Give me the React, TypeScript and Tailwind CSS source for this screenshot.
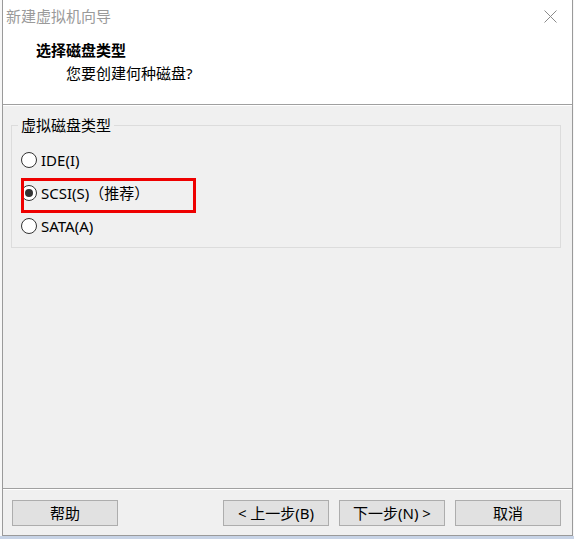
import React from "react";

const FONT = '"Noto Sans", "Noto Sans CJK SC", sans-serif';

function Radio({ checked, label, extra }: { checked?: boolean; label: string; extra?: string }) {
  return (
    <div className="flex items-center h-[33px] pl-[9px]">
      <span className="w-[16px] h-[16px] rounded-full border border-[#333333] bg-white flex items-center justify-center shrink-0">
        {checked && <span className="w-[8px] h-[8px] rounded-full bg-[#333333]" />}
      </span>
      <span className="ml-[4px] text-[15px] leading-[20px] text-black">{label}</span>
      {extra && <span className="text-[15px] leading-[20px] text-black">{extra}</span>}
    </div>
  );
}

function Btn({ children }: { children: React.ReactNode }) {
  return (
    <button className="w-[106px] h-[26px] bg-[#e1e1e1] border border-[#adadad] text-[15px] leading-[20px] text-black flex items-center justify-center">
      {children}
    </button>
  );
}

export default function App() {
  return (
    <div className="w-[574px] h-[539px] bg-[#f7f7f7] overflow-hidden relative" style={{ fontFamily: FONT }}>
      <div className="ml-[2px] w-[571px] h-[536px] bg-[#f0f0f0] border-l border-r border-b border-[#9a9a9a] flex flex-col">
        {/* title bar */}
        <div className="h-[32px] bg-white flex items-center justify-between pl-[3px] pr-[14px]">
          <span className="text-[15px] leading-[20px] text-[#9a9a9a]">新建虚拟机向导</span>
          <svg width="13" height="13" viewBox="0 0 13 13" className="mr-[1px]">
            <path d="M0.5 0.5 L12.5 12.5 M12.5 0.5 L0.5 12.5" stroke="#8a8a8a" strokeWidth="1" fill="none" />
          </svg>
        </div>
        {/* header */}
        <div className="h-[72px] bg-white pl-[33px] pt-[8px]">
          <div className="text-[15px] leading-[20px] font-bold text-black">选择磁盘类型</div>
          <div className="mt-[3px] ml-[30px] text-[15px] leading-[20px] text-black">您要创建何种磁盘?</div>
        </div>
        <div className="h-[1px] bg-[#a0a0a0]" />
        <div className="h-[1px] bg-white" />
        {/* body */}
        <div className="flex-1 pl-[8px] pt-[19px] relative">
          <div className="relative w-[550px] h-[123px] border border-[#dcdcdc] pt-[17px]">
            <span className="absolute left-[6px] top-[-11px] px-[3px] bg-[#f0f0f0] text-[15px] leading-[20px] text-black">
              虚拟磁盘类型
            </span>
            <Radio label="IDE(I)" />
            <Radio checked label="SCSI(S)" extra="（推荐）" />
            <Radio label="SATA(A)" />
          </div>
          <div className="absolute left-[18px] top-[72px] w-[175px] h-[35px] border-[3px] border-[#ee0000]" />
        </div>
        <div className="h-[1px] bg-[#a0a0a0]" />
        <div className="h-[1px] bg-white" />
        {/* footer */}
        <div className="h-[45px] pl-[9px] pr-[11px] pt-[10px] flex items-start justify-between">
          <Btn>帮助</Btn>
          <div className="flex gap-[10px]">
            <Btn>&lt; 上一步(B)</Btn>
            <Btn>下一步(N) &gt;</Btn>
            <Btn>取消</Btn>
          </div>
        </div>
      </div>
      <div className="h-[3px] bg-[#c7d3e6]" />
    </div>
  );
}
